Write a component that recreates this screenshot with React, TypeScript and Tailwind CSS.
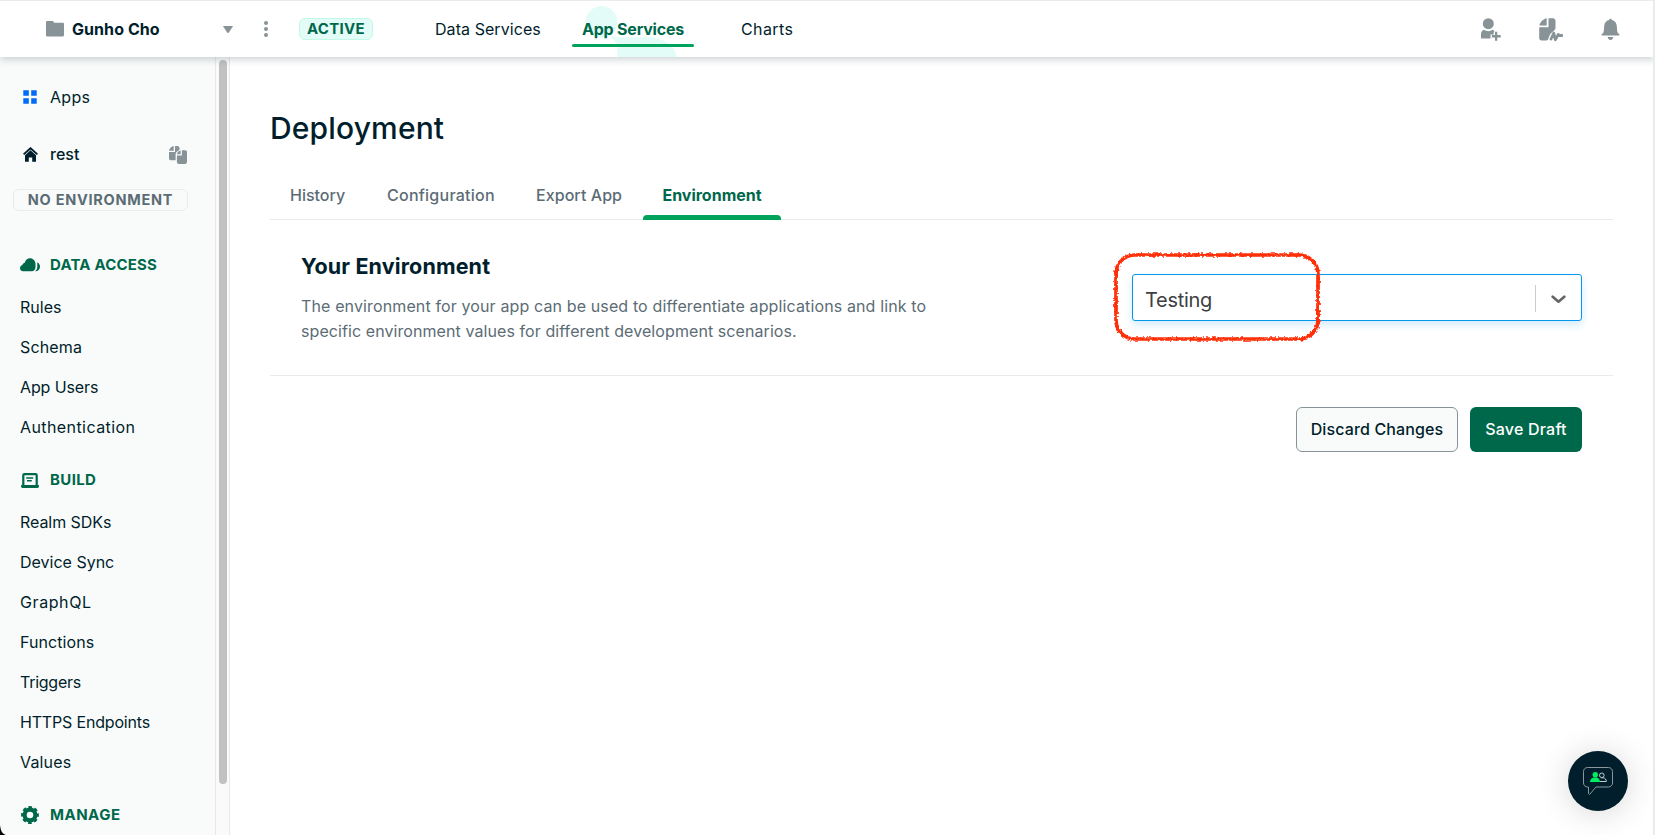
import type { ReactNode } from "react";

type IconProps = { className?: string };

const FolderIcon = ({ className }: IconProps) => (
  <svg viewBox="0 0 18 16" className={className} fill="currentColor">
    <path d="M0 1.200C0 .5.5 0 1.200 0H6.500c.6 0 1 .3 1.200.8L8 1.800h8.800c.7 0 1.200.5 1.200 1.200v11.300c0 .7-.5 1.200-1.200 1.200H1.200C.5 15.500 0 15 0 14.300Z" />
  </svg>
);

const AppsIcon = ({ className }: IconProps) => (
  <svg viewBox="0 0 14 14" className={className} fill="currentColor">
    <path d="M.3.300h5.500v5.500H.3ZM8.200.300h5.500v5.500H8.200ZM.3 8.200h5.500v5.500H.3ZM8.200 8.200h5.500v5.500H8.200Z" />
  </svg>
);

const HomeIcon = ({ className }: IconProps) => (
  <svg viewBox="0 0 15 15" className={className}>
    <path d="M.6 7.400 7.500 1.200l6.900 6.200" fill="none" stroke="currentColor" strokeWidth="1.900" />
    <path d="M7.500 3.300 13 8.200V14.700H9.200V10.500H5.800v4.200H2V8.200Z" fill="currentColor" />
  </svg>
);

const CopyPagesIcon = ({ className }: IconProps) => (
  <svg viewBox="0 0 18 18" className={className}>
    <path d="M4.700 0v4.700H0C.5 2.300 2.300.5 4.700 0ZM6 0h2.500C9.700 0 10.500 1 10.500 2v2C8.500 4.500 6.800 6.500 6.600 8v6.300H1.700C.7 14.300 0 13.500 0 12.600V6h6Z" fill="currentColor" />
    <path d="M11.600 4.600v3.600H8c.3-1.800 1.700-3.200 3.600-3.600ZM12.900 4.300h3.300c1 0 1.800.8 1.800 1.800v10c0 1-.8 1.800-1.800 1.800H9.700c-1 0-1.800-.8-1.800-1.800V9.500h5Z" fill="currentColor" />
  </svg>
);

const CloudIcon = ({ className }: IconProps) => (
  <svg viewBox="0 0 20 14" className={className} fill="currentColor">
    <path d="M3.200 13.300C1.400 13.300 0 12 0 10.200 0 8.700 1 7.500 2.300 7.100 2.600 6 3.500 5 4.700 4.700 5.300 2 7.500.2 10 .2c3 0 5.500 2.500 5.500 5.500v3.600c0 2.300-1.500 4-3.700 4Z" />
    <path d="M17.300 4.300c1.700 1 2.700 2.500 2.700 4.500 0 2.600-2 4.500-4.700 4.500h-.3c1.600-1.300 2.300-2.700 2.300-4.800Z" />
  </svg>
);

const LaptopIcon = ({ className }: IconProps) => (
  <svg viewBox="0 0 18 16" className={className}>
    <path d="M2.300 13V2.300C2.300 1.500 2.700 1.100 3.400 1.100h11.200c.7 0 1.100.4 1.100 1.200V13" fill="none" stroke="currentColor" strokeWidth="2.200" />
    <path d="M.1 12h17.800v1.500c0 .9-.5 1.400-1.300 1.400H1.400C.6 14.900.1 14.400.1 13.500Z" fill="currentColor" />
    <path d="M5.200 5h7M6 7.800h4.800" fill="none" stroke="currentColor" strokeWidth="1.400" />
  </svg>
);

const GearIcon = ({ className }: IconProps) => (
  <svg viewBox="0 0 18 18" className={className}>
    <circle cx="9" cy="9" r="5.400" fill="none" stroke="currentColor" strokeWidth="4.200" />
    <circle cx="9" cy="9" r="7.700" fill="none" stroke="currentColor" strokeWidth="2.400" strokeDasharray="3.600 2.447" strokeDashoffset="1.800" />
  </svg>
);

const InviteIcon = ({ className }: IconProps) => (
  <svg viewBox="0 0 20 23" className={className} fill="currentColor">
    <circle cx="7.300" cy="5.700" r="5.500" />
    <path d="M0 20.500v-4.300c0-2.100 1-3.700 2.800-4.400 2.700 1.900 6.300 1.900 9 0 .6.200 1.100.6 1.500 1v1h-.6v2.700H9.500v4Z" />
    <path d="M14 13.800h2.300v3.300h3.400v2.300h-3.400v3.400H14v-3.400h-3.200v-2.300H14Z" />
  </svg>
);

const SupportIcon = ({ className }: IconProps) => (
  <svg viewBox="0 0 24 24" className={className} fill="currentColor">
    <path d="M7.700.3v7.200H.3C1.200 4 4.200 1 7.700.3Z" />
    <path d="M9.500.200h4.300c1.600 0 2.700 1.200 2.700 2.700v6.800c0 1-.3 1.600-1 2.300l-3.700 3.500c-.6.600-.9 1.200-1.200 2L9 21.500c-.3.700-.8 1-1.500 1H2.700C1.200 22.500.2 21.500.2 20V9.300h9.300Z" />
    <path d="m12 21 2.800-6 1.500 6.800 3-5.300 1 1h2.700" fill="none" stroke="currentColor" strokeWidth="2.800" strokeLinejoin="round" strokeLinecap="round" />
  </svg>
);

const BellIcon = ({ className }: IconProps) => (
  <svg viewBox="0 0 20 23" className={className} fill="currentColor">
    <path d="M10 .3c.8 0 1.300.6 1.400 1.300 3.300.8 5.200 3.300 5.300 6.900l.3 4.200c.1 1.600 1 2.700 2 3.500.8.600.6 1.500-.3 1.500H1.300c-.9 0-1.100-.9-.3-1.500 1-.8 1.900-1.900 2-3.500l.3-4.200c.1-3.600 2-6.100 5.300-6.900C8.700.9 9.200.3 10 .3ZM7 19.500h6c-.2 1.800-1.300 3-3 3s-2.800-1.200-3-3Z" />
  </svg>
);

const ChatIcon = ({ className }: IconProps) => (
  <svg viewBox="0 0 30 28" className={className} fill="none">
    <path d="M4.500.5h21c2.200 0 4 1.800 4 4V16c0 2.200-1.800 4-4 4H13L7 27c-.6.600-1.500.3-1.500-.5V20h-1C2.300 20 .5 18.200.5 16V4.500c0-2.200 1.800-4 4-4Z" stroke="#8b979b" />
    <circle cx="18.800" cy="8.300" r="2.300" stroke="#c1cbcd" />
    <path d="M17 14.500h6.300c0-2-1-3.300-3-3.700h-2" stroke="#c1cbcd" />
    <circle cx="12.300" cy="7.800" r="2.700" fill="#00ed64" />
    <path d="M7 15c0-2.500 1.500-4 4-4.600h2.600c2 .6 3.300 2.100 3.500 4.600Z" fill="#00ed64" />
  </svg>
);

function NavGroup({ icon, title, items, className }: { icon: ReactNode; title: ReactNode; items: ReactNode[]; className: string }) {
  return (
    <section className={className}>
      <h3 className="flex h-5 items-center text-[15px] font-bold leading-5 text-[#00684a]">
        <span className="flex w-[30px] shrink-0">{icon}</span>
        {title}
      </h3>
      <ul className="mt-[12px]">
        {items.map((item, i) => (
          <li key={i} className="flex h-10 items-center text-[16px] leading-10">
            {item}
          </li>
        ))}
      </ul>
    </section>
  );
}

function Header() {
  return (
    <header className="relative z-10 flex h-[57px] shrink-0 items-center border-t border-[#e8edeb] bg-white shadow-[0_3px_7px_rgba(0,30,43,0.18)]">
      <FolderIcon className="ml-[46px] h-4 w-[18px] text-[#889397]" />
      <span className="ml-[8px] w-[151px] text-[16px] font-bold tracking-[0.004em]">Gunho Cho</span>
      <svg viewBox="0 0 10 7" className="h-[7px] w-[10px] text-[#889397]" fill="currentColor">
        <path d="M.2.100h9.600L5.700 6.500c-.3.400-1.100.4-1.400 0Z" stroke="currentColor" strokeWidth=".4" />
      </svg>
      <svg viewBox="0 0 4 16" className="ml-[31px] h-4 w-1 text-[#889397]" fill="currentColor">
        <circle cx="2" cy="2" r="2" />
        <circle cx="2" cy="8" r="2" />
        <circle cx="2" cy="14" r="2" />
      </svg>
      <span className="ml-[31px] flex h-[22px] w-[74px] items-center justify-center rounded-md border border-[#c0fae6] bg-[#e3fcf7] text-[15px] font-bold tracking-[0.020em] text-[#00684a]">
        ACTIVE
      </span>
      <nav className="flex h-full items-center text-[16px]">
        <a className="ml-[62px] w-[137px] tracking-[0.004em]">Data Services</a>
        <a className="relative flex h-full w-[122px] items-center justify-center font-bold tracking-[-0.013em] text-[#00684a]">
          <svg viewBox="0 0 122 56" className="absolute inset-0 h-[56px] w-[122px]">
            <circle cx="29.500" cy="21" r="16" fill="#e3fcf7" />
            <path d="M38 34c5 2 9 2.300 20 2.300h17c15 0 27 7 30 19.700H45.500V44Z" fill="#e3fcf7" />
          </svg>
          <span className="relative">App Services</span>
          <span className="absolute bottom-[10px] left-0 h-[3px] w-full rounded-full bg-[#00a35c]" />
        </a>
        <a className="ml-[47px] tracking-[0.025em]">Charts</a>
      </nav>
      <div className="ml-auto mr-[35px] flex items-center text-[#889397]">
        <InviteIcon className="h-[23px] w-5" />
        <SupportIcon className="ml-[38px] mt-px h-6 w-6" />
        <BellIcon className="ml-[38px] h-[23px] w-[19px]" />
      </div>
    </header>
  );
}

function Sidebar() {
  return (
    <aside className="flex w-[230px] shrink-0 bg-[#f9fbfa]">
      <div className="relative w-[215px] overflow-hidden pl-5">
        <div className="mt-[30px] flex h-5 items-center text-[16px] tracking-[0.020em]">
          <AppsIcon className="ml-[3px] mr-[13px] h-[14px] w-[14px] text-[#016bf8]" />
          Apps
        </div>
        <div className="mt-[37px] flex h-5 items-center text-[16px] font-medium">
          <HomeIcon className="ml-[3px] mr-[12px] mt-px h-[15px] w-[15px]" />
          rest
          <CopyPagesIcon className="ml-auto mr-7 mt-[2px] h-[18px] w-[18px] text-[#889397]" />
        </div>
        <div className="-ml-[7px] mt-[25px] flex h-[22px] w-[175px] items-center justify-center rounded-md border border-[#e8edeb] text-[14.500px] font-bold tracking-[0.050em] text-[#5c6c75]">
          NO ENVIRONMENT
        </div>
        <NavGroup
          className="mt-[44px]"
          icon={<CloudIcon className="h-[14px] w-5" />}
          title={<span className="tracking-[0.012em]">DATA ACCESS</span>}
          items={[
            "Rules",
            <span className="tracking-[0.010em]">Schema</span>,
            <span className="tracking-[-0.007em]">App Users</span>,
            <span className="tracking-[0.026em]">Authentication</span>,
          ]}
        />
        <NavGroup
          className="mt-[23px]"
          icon={<LaptopIcon className="ml-px mt-px h-4 w-[18px]" />}
          title={<span className="tracking-[0.025em]">BUILD</span>}
          items={[
            <span className="tracking-[-0.004em]">Realm SDKs</span>,
            "Device Sync",
            <span className="tracking-[0.037em]">GraphQL</span>,
            <span className="tracking-[0.005em]">Functions</span>,
            <span className="tracking-[-0.016em]">Triggers</span>,
            <span className="tracking-[-0.011em]">HTTPS Endpoints</span>,
            <span className="tracking-[0.010em]">Values</span>,
          ]}
        />
        <NavGroup
          className="mt-[23px]"
          icon={<GearIcon className="ml-px h-[18px] w-[18px]" />}
          title={<span className="tracking-[0.033em]">MANAGE</span>}
          items={[]}
        />
      </div>
      <div className="flex w-[15px] justify-center border-x border-[#e8e8e8] bg-[#fafafa] pt-[3px]">
        <div className="h-[724px] w-2 rounded-full bg-[#c1c1c1]" />
      </div>
    </aside>
  );
}

function EnvironmentForm() {
  return (
    <>
      <section className="flex h-[156px] justify-between border-b border-[#e8edeb] pl-[31px] pr-[31px]">
        <div className="pt-[32px]">
          <h2 className="text-[21.500px] font-bold leading-7 tracking-[0.006em]">Your Environment</h2>
          <p className="mt-[14px] whitespace-nowrap text-[16px] leading-[25px] text-[#5c6c75]">
            <span className="tracking-[0.008em]">The environment for your app can be used to differentiate applications and link to</span>
            <br />
            <span className="tracking-[0.005em]">specific environment values for different development scenarios.</span>
          </p>
        </div>
        <div className="relative mt-[54px] flex h-[47px] w-[450px] items-center rounded-[3px] border border-[#0498ec] bg-white pl-[12px] shadow-[0_4px_8px_rgba(4,152,236,0.18)]">
          <span className="pt-[4px] text-[20px] leading-6 tracking-[-0.015em] text-[#3d4043]">Testing</span>
          <span className="ml-auto mt-[2px] h-[27px] w-px bg-[#ccc]" />
          <svg viewBox="0 0 15 9" className="ml-[15px] mr-[15px] mt-[3px] h-[9px] w-[15px]" fill="none">
            <path d="m1.700 1.700 5.800 5 5.800-5" stroke="#666" strokeWidth="2.700" strokeLinecap="round" strokeLinejoin="round" />
          </svg>
          <svg viewBox="0 0 208 90" className="absolute -left-[20px] -top-[23px] h-[90px] w-[208px]" fill="none">
            <filter id="marker" x="-2%" y="-4%" width="104%" height="108%" colorInterpolationFilters="sRGB">
              <feTurbulence type="fractalNoise" baseFrequency="0.350" numOctaves="2" seed="4" />
              <feDisplacementMap in="SourceGraphic" scale="4" xChannelSelector="R" yChannelSelector="G" />
              <feGaussianBlur stdDeviation="0.350" />
            </filter>
            <rect x="3" y="3" width="202" height="84" rx="19" stroke="#ff3008" strokeWidth="3.700" filter="url(#marker)" />
          </svg>
        </div>
      </section>
      <div className="mt-[31px] flex justify-end gap-[12px] pr-[31px] text-[16px] font-medium">
        <button className="h-[45px] w-[162px] whitespace-nowrap rounded-md border border-[#889397] bg-[#f9fbfa] pb-[2px] tracking-[0.008em]">Discard Changes</button>
        <button className="h-[45px] w-[112px] whitespace-nowrap rounded-md bg-[#00684a] pb-[2px] tracking-[0.013em] text-white">Save Draft</button>
      </div>
    </>
  );
}

export default function App() {
  return (
    <div className="relative flex h-[835px] w-[1655px] flex-col overflow-hidden bg-white font-['Inter',sans-serif] text-[16px] text-[#001e2b]">
      <Header />
      <div className="flex min-h-0 flex-1">
        <Sidebar />
        <main className="flex-1 pl-10 pr-[42px] pt-[51px]">
          <h1 className="h-10 text-[30px] font-medium leading-10 tracking-[0.005em]">Deployment</h1>
          <div className="mt-[24px] flex h-[48px] border-b border-[#e8edeb] pl-5 font-medium leading-[46px] text-[#5c6c75]">
            <a className="w-[97px]">History</a>
            <a className="w-[149px] tracking-[0.015em]">Configuration</a>
            <a className="w-[107px] tracking-[0.004em]">Export App</a>
            <a className="relative h-[48px] w-[138px] text-center font-bold text-[#00684a]">
              Environment
              <span className="absolute bottom-0 left-0 h-[5px] w-full rounded-t bg-[#00a35c]" />
            </a>
          </div>
          <EnvironmentForm />
        </main>
      </div>
      <div className="absolute right-0 top-0 z-20 h-full w-[2px] bg-[#e8edeb]" />
      <button className="absolute bottom-[24px] right-[27px] flex h-[60px] w-[60px] items-center justify-center rounded-full bg-[#001e2b] shadow-[0_2px_32px_rgba(0,0,0,0.16)]">
        <ChatIcon className="h-7 w-[30px]" />
      </button>
      <svg viewBox="0 0 10 10" className="absolute bottom-0 left-0 h-[10px] w-[6px]" preserveAspectRatio="none">
        <path d="M0 0c1 6 4 9 10 10H0Z" fill="#000" />
      </svg>
    </div>
  );
}
